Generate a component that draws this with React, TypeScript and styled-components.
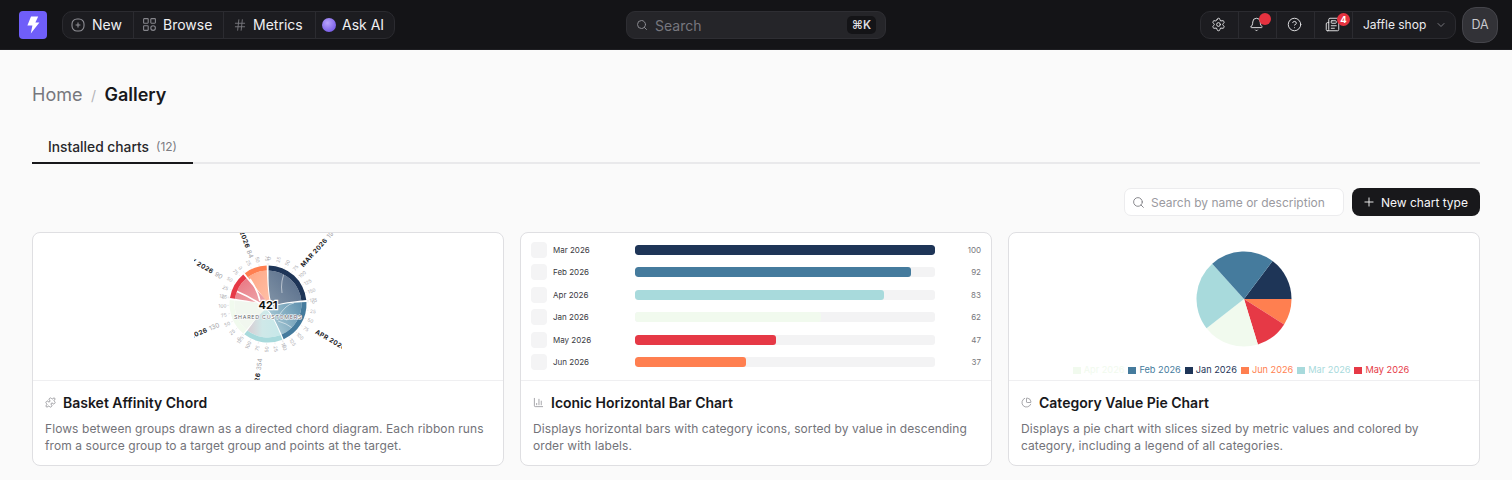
import React from 'react';
import styled, { createGlobalStyle } from 'styled-components';
import { Bell, ChartColumn, ChartPie, ChevronDown, CircleHelp, Hash, Newspaper, Plus, Puzzle, Search, Settings } from 'lucide-react';

const Global = createGlobalStyle`
  html, body { margin: 0; padding: 0; background: #fafafa; overflow: hidden; }
  body { font-family: Inter, "Noto Sans", sans-serif; -webkit-font-smoothing: antialiased; }
  * { box-sizing: border-box; }
`;

const Page = styled.div`width: 1512px; height: 480px; display: flex; flex-direction: column;`;
const TopBar = styled.header`
  height: 50px; flex: none; background: #141417; display: flex; align-items: center; justify-content: space-between;
  padding: 0 14px 0 19px; position: relative; border-bottom: 1px solid #1e1e22;
`;
const Side = styled.div`display: flex; align-items: center; gap: ${p => p.$gap}px;`;
const Logo = styled.div`width: 28px; height: 28px; border-radius: 4px; background: #6f5ef9; display: flex; align-items: center; justify-content: center;`;
const Group = styled.div`height: 28px; display: flex; border: 1px solid #2b2b30; border-radius: 10px; background: #1c1c20; overflow: visible;`;
const NavItem = styled.div`
  width: ${p => p.$w}px; height: 100%; display: flex; align-items: center; justify-content: ${p => p.$center ? 'center' : 'flex-start'};
  gap: ${p => p.$gap ?? 8}px; padding-left: ${p => p.$pl ?? 0}px; padding-right: ${p => p.$center ? 2 : 0}px;
  color: #f0f0f2; font-size: 14px; font-weight: 400; position: relative;
  & + & { border-left: 1px solid #2b2b30; }
  svg { flex: none; }
`;
const Orb = styled.span`width: 14px; height: 14px; border-radius: 50%; background: radial-gradient(circle at 40% 35%, #b9a4fb, #7a5ee8 75%); display: block;`;
const Dot = styled.span`position: absolute; left: 20px; top: 1px; width: 12px; height: 12px; border-radius: 50%; background: #e5323f;`;
const Count = styled.span`
  position: absolute; left: 22px; top: 1px; width: 13px; height: 13px; border-radius: 50%; background: #e5323f; color: #fff;
  font-size: 9.5px; font-weight: 700; display: flex; align-items: center; justify-content: center;
`;
const TopSearch = styled.div`
  position: absolute; left: 626px; top: 11px; width: 260px; height: 28px; background: #252529; border: 1px solid #2e2e33; border-radius: 9px;
  display: flex; align-items: center; padding: 0 9px 0 9px; gap: 7px; color: #77777e; font-size: 14px;
`;
const Grow = styled.span`flex: 1;`;
const Kbd = styled.span`height: 18px; width: 29px; background: #141417; border-radius: 5px; color: #dcdce0; font-size: 11.5px; font-weight: 600; display: flex; align-items: center; justify-content: center;`;
const Shop = styled.div`width: 103px; height: 100%; display: flex; align-items: center; gap: 9px; padding-left: 10px; color: #ececef; font-size: 12px; font-weight: 400; border-left: 1px solid #2b2b30;`;
const Avatar = styled.div`width: 36px; height: 36px; border-radius: 14px; background: #323237; border: 1px solid #45454b; color: #c9c9ce; font-size: 12.5px; font-weight: 400; display: flex; align-items: center; justify-content: center;`;

const Main = styled.main`flex: 1; padding: 0 32px; display: flex; flex-direction: column;`;
const Crumbs = styled.div`display: flex; align-items: baseline; height: 24px; margin-top: 33px; font-size: 18px; line-height: 24px; font-weight: 600; color: #18181b;`;
const CrumbHome = styled.span`color: #77777d; font-weight: 400;`;
const CrumbSep = styled.span`color: #b4b4b8; font-size: 14px; font-weight: 400; margin: 0 8.5px;`;
const Tabs = styled.div`margin-top: 25px; height: 32px; border-bottom: 2px solid #e9e9eb; display: flex;`;
const Tab = styled.div`
  width: 161px; height: 32px; border-bottom: 2px solid #18181b; display: flex; align-items: center; padding: 0 0 1px 16px; gap: 7px;
  color: #27272a; font-size: 13.8px; font-weight: 500;
`;
const TabCount = styled.span`color: #7c7c82; font-size: 12px; font-weight: 400;`;
const Toolbar = styled.div`margin-top: 24px; height: 28px; display: flex; justify-content: flex-end; gap: 8px;`;
const FilterBox = styled.div`
  width: 220px; height: 28px; background: #fff; border: 1px solid #ececee; border-radius: 7px; display: flex; align-items: center;
  gap: 6px; padding-left: 7px; color: #9a9aa0; font-size: 12px;
`;
const Primary = styled.button`
  width: 128px; height: 28px; background: #18181b; color: #f7f7f8; border: 0; border-radius: 8px; display: flex; align-items: center; gap: 5px;
  padding: 0 0 0 10px; font: 400 12px Inter, sans-serif;
`;
const Grid = styled.section`margin-top: 16px; display: grid; grid-template-columns: repeat(3, 472px); gap: 16px;`;
const Card = styled.article`height: 234px; background: #fff; border: 1px solid #dfdfe2; border-radius: 8px; overflow: hidden; display: flex; flex-direction: column;`;
const Preview = styled.div`height: 148px; flex: none; border-bottom: 1px solid #efeff1; display: flex; justify-content: center;`;
const Body = styled.div`padding: 12px 12px 0;`;
const TitleRow = styled.h3`margin: 0; display: flex; align-items: center; gap: ${p => p.$gap}px; height: 18px; font-size: 14px; font-weight: 600; color: #18181b; svg { flex: none; }`;
const Desc = styled.p`margin: 9px 0 0; font-size: 12px; line-height: 17px; color: #737379; letter-spacing: 0.08px;`;

const BarList = styled.div`width: 100%; padding: 9px 10px 0; display: flex; flex-direction: column; gap: 6.4px;`;
const BarRow = styled.div`display: grid; grid-template-columns: 16px 88px 300px 1fr; height: 16px; align-items: center;`;
const IconBox = styled.span`width: 16px; height: 16px; background: #f4f4f5; border-radius: 4px; display: block;`;
const BarLabel = styled.span`padding-left: 6px; font-size: 8px; color: #3a3a3f; font-weight: 400;`;
const Track = styled.span`height: 10px; background: #f3f3f4; border-radius: 3px; display: block; overflow: hidden;`;
const Fill = styled.span`height: 100%; display: block; border-radius: 3px; background: ${p => p.$c};`;
const BarVal = styled.span`text-align: right; font-size: 8px; color: #77777c;`;

const PieWrap = styled.div`width: 100%; display: flex; flex-direction: column; align-items: center; padding-top: 18px;`;
const Legend = styled.div`display: flex; gap: 4px; margin-top: 17px; height: 12px; align-items: center; margin-left: -6px;`;
const LegendItem = styled.span`display: flex; align-items: center; gap: 3px; font-size: 9.2px; line-height: 12px; color: ${p => p.$c};`;
const Swatch = styled.i`width: 8px; height: 7px; display: block; background: ${p => p.$c};`;

const C = { navy: '#1e3557', blue: '#457b9d', teal: '#a8dadc', pale: '#f1faee', red: '#e63946', orange: '#ff7f50' };

const pt = (cx: number, cy: number, r: number, deg: number) => {
  const a = (deg - 90) * Math.PI / 180;
  return [+(cx + r * Math.cos(a)).toFixed(2), +(cy + r * Math.sin(a)).toFixed(2)];
};
const ring = (r0: number, r1: number, a: number, b: number) => {
  const [x1, y1] = pt(74, 71, r1, a), [x2, y2] = pt(74, 71, r1, b), [x3, y3] = pt(74, 71, r0, b), [x4, y4] = pt(74, 71, r0, a);
  return `M${x1} ${y1}A${r1} ${r1} 0 0 1 ${x2} ${y2}L${x3} ${y3}A${r0} ${r0} 0 0 0 ${x4} ${y4}Z`;
};
const ribbon = (a: number, b: number, r: number, tip: number, tipA: number) => {
  const [x1, y1] = pt(74, 71, r, a), [x2, y2] = pt(74, 71, r, b), [tx, ty] = pt(74, 71, tip, tipA);
  return `M${x1} ${y1}A${r} ${r} 0 0 1 ${x2} ${y2}Q${74} ${71} ${tx} ${ty}Q${74} ${71} ${x1} ${y1}Z`;
};

const groups = [
  { c: C.navy, a: 1, b: 84, ticks: [0, 25, 50, 75, 100, 125, 150, 175] },
  { c: C.blue, a: 87, b: 156, ticks: [0, 25, 50, 75, 100, 125, 150] },
  { c: C.teal, a: 158, b: 218, ticks: [0, 25, 50, 75, 100, 125] },
  { c: C.pale, a: 220, b: 276, ticks: [0, 25, 50, 75, 100, 125] },
  { c: C.red, a: 279, b: 320, ticks: [0, 25, 50, 75] },
  { c: C.orange, a: 323, b: 358, ticks: [0, 25, 50, 75] },
];
const labels = [
  { t: 'MAR 2026', n: '198', deg: 42, r: 51, end: false },
  { t: 'APR 2026', n: '', deg: 120, r: 55, end: false },
  { t: 'FEB 2026', n: '354', deg: 188, r: 55, end: true },
  { t: 'JAN 2026', n: '130', deg: 247, r: 53, end: true },
  { t: 'MAY 2026', n: '90', deg: 300, r: 53, end: true },
  { t: 'JUN 2026', n: '84', deg: 340, r: 49, end: true },
];

const ChordSvg = styled.svg`width: 148px; height: 147px; display: block; text { font-family: Inter, sans-serif; }`;

function Chord() {
  return (
    <ChordSvg viewBox="0 0 148 147">
      <defs>
        <linearGradient id="gn" x1="1" y1="0" x2="0" y2="1"><stop offset="0" stopColor="#526887" /><stop offset="1" stopColor="#8496a8" /></linearGradient>
        <linearGradient id="gb" x1="1" y1="0" x2="0" y2="0.5"><stop offset="0" stopColor="#5f90ae" /><stop offset="1" stopColor="#aacbd6" /></linearGradient>
        <linearGradient id="gt" x1="1" y1="0" x2="0" y2="0"><stop offset="0" stopColor="#c6e8e9" /><stop offset=".55" stopColor="#cfe8e8" /><stop offset="1" stopColor="#d8ccd2" /></linearGradient>
        <linearGradient id="gr" x1="0" y1="0" x2="1" y2="1"><stop offset="0" stopColor="#e9727d" /><stop offset="1" stopColor="#eeb3b8" /></linearGradient>
        <linearGradient id="go" x1="0" y1="0" x2="1" y2="1"><stop offset="0" stopColor="#ffa582" /><stop offset="1" stopColor="#ffc4ad" /></linearGradient>
      </defs>
      <path d={ribbon(1, 84, 33.5, 8, 120)} fill="url(#gn)" />
      <path d={ribbon(87, 156, 33.5, 8, 190)} fill="url(#gb)" />
      <path d={ribbon(158, 218, 33.5, 9, 250)} fill="url(#gt)" />
      <path d={ribbon(220, 276, 33.5, 8, 80)} fill="#f1f7ef" />
      <path d={ribbon(279, 320, 33.5, 7, 100)} fill="url(#gr)" />
      <path d={ribbon(323, 358, 33.5, 6, 130)} fill="url(#go)" />
      <path d="M42 58 Q56 64 68 72M56 46 Q64 58 66 68" stroke="#fff" strokeWidth="1.6" fill="none" />
      <path d="M100 70 Q92 71 84 84M92 36 Q86 48 88 60M100 96 Q92 90 84 88" stroke="#fff" strokeWidth=".7" fill="none" opacity=".75" />
      {groups.map((g, i) => <path key={i} d={ring(33.5, 38.5, g.a, g.b)} fill={g.c} />)}
      {groups.map((g, i) => g.ticks.map((v, k) => {
        const deg = g.a + k * 12;
        const [x1, y1] = pt(74, 71, 39, deg), [x2, y2] = pt(74, 71, 41, deg), [x, y] = pt(74, 71, 45.5, deg);
        const rot = deg < 180 ? deg - 90 : deg + 90;
        return (
          <g key={`${i}-${k}`}>
            <line x1={x1} y1={y1} x2={x2} y2={y2} stroke="#dedee1" strokeWidth=".5" />
            <text x={x} y={y} fontSize="4.8" fill="#ababb0" textAnchor="middle" dominantBaseline="central" transform={`rotate(${rot} ${x} ${y})`}>{v}</text>
          </g>
        );
      }))}
      {labels.map(l => {
        const [x, y] = pt(74, 71, l.r, l.deg);
        const rot = l.end ? l.deg + 90 : l.deg - 90;
        return (
          <text key={l.t} x={x} y={y} fontSize="6.4" fontWeight="700" letterSpacing=".4" fill="#222226" textAnchor={l.end ? 'end' : 'start'} dominantBaseline="central" transform={`rotate(${rot} ${x} ${y})`}>
            {l.t}<tspan dx="2.5" fontWeight="400" fill="#a1a1a6" letterSpacing="0">{l.n}</tspan>
          </text>
        );
      })}
      <text x="74" y="72" fontSize="11" fontWeight="700" fill="#111" stroke="#fff" strokeWidth="2.4" paintOrder="stroke" textAnchor="middle" dominantBaseline="central">421</text>
      <text x="74" y="84" fontSize="5.3" fontWeight="400" letterSpacing=".75" fill="#66666c" stroke="#fff" strokeWidth="1.2" paintOrder="stroke" textAnchor="middle" dominantBaseline="central">SHARED CUSTOMERS</text>
    </ChordSvg>
  );
}

const bars = [
  ['Mar 2026', 100, C.navy], ['Feb 2026', 92, C.blue], ['Apr 2026', 83, C.teal],
  ['Jan 2026', 62, C.pale], ['May 2026', 47, C.red], ['Jun 2026', 37, C.orange],
] as const;

const pie = [
  { c: C.navy, a: 37, b: 90 }, { c: C.orange, a: 90, b: 122.4 }, { c: C.red, a: 122.4, b: 163 },
  { c: C.pale, a: 163, b: 232 }, { c: C.teal, a: 232, b: 318 }, { c: C.blue, a: 318, b: 397 },
];
const legend = [
  ['Apr 2026', C.pale], ['Feb 2026', C.blue], ['Jan 2026', C.navy], ['Jun 2026', C.orange], ['Mar 2026', C.teal], ['May 2026', C.red],
] as const;

const wedge = (a: number, b: number) => {
  const p = (d: number) => { const r = (d - 90) * Math.PI / 180; return `${(48 + 47.5 * Math.cos(r)).toFixed(2)} ${(48 + 47.5 * Math.sin(r)).toFixed(2)}`; };
  return `M48 48L${p(a)}A47.5 47.5 0 0 1 ${p(b)}Z`;
};

const NewIcon = () => (
  <svg width="14" height="14" viewBox="0 0 14 14" fill="none" stroke="#8f8f95" strokeWidth="1.1">
    <rect x="1" y="1" width="12" height="12" rx="5" /><path d="M7 4.6v4.8M4.6 7h4.8" />
  </svg>
);
const BrowseIcon = () => (
  <svg width="13" height="13" viewBox="0 0 13 13" fill="none" stroke="#85858b" strokeWidth="1.1">
    <rect x=".6" y=".6" width="4.6" height="4.6" rx=".6" /><rect x="7.8" y=".6" width="4.6" height="4.6" rx=".6" />
    <rect x=".6" y="7.8" width="4.6" height="4.6" rx=".6" /><circle cx="10.1" cy="10.1" r="2.3" />
  </svg>
);
const Bolt = () => (
  <svg width="14" height="18" viewBox="0 0 14 18"><path d="M5 0.6h7.2L9.4 6.6h4L4.8 17.6l1.6-8H1.4z" fill="#fff" /></svg>
);

export default function App() {
  return (
    <Page>
      <Global />
      <TopBar>
        <Side $gap={15}>
          <Logo><Bolt /></Logo>
          <Group>
            <NavItem $w={70} $pl={8} $gap={7}><NewIcon />New</NavItem>
            <NavItem $w={90} $pl={9} $gap={7}><BrowseIcon />Browse</NavItem>
            <NavItem $w={92} $pl={9} $gap={6}><Hash size={14} color="#77777d" strokeWidth={1.6} />Metrics</NavItem>
            <NavItem $w={79} $pl={6} $gap={6}><Orb />Ask AI</NavItem>
          </Group>
        </Side>
        <TopSearch>
          <Search size={12} color="#8a8a90" strokeWidth={2} />
          <Grow>Search</Grow>
          <Kbd>⌘K</Kbd>
        </TopSearch>
        <Side $gap={6}>
          <Group>
            <NavItem $w={37} $center><Settings size={15} color="#e6e6e9" strokeWidth={1.5} /></NavItem>
            <NavItem $w={38} $center><Bell size={15} color="#e6e6e9" strokeWidth={1.5} /><Dot /></NavItem>
            <NavItem $w={38} $center><CircleHelp size={15} color="#e6e6e9" strokeWidth={1.5} /></NavItem>
            <NavItem $w={38} $center><Newspaper size={15} color="#e6e6e9" strokeWidth={1.5} /><Count>4</Count></NavItem>
            <Shop>Jaffle shop<ChevronDown size={12} color="#77777d" /></Shop>
          </Group>
          <Avatar>DA</Avatar>
        </Side>
      </TopBar>
      <Main>
        <Crumbs><CrumbHome>Home</CrumbHome><CrumbSep>/</CrumbSep>Gallery</Crumbs>
        <Tabs><Tab>Installed charts<TabCount>(12)</TabCount></Tab></Tabs>
        <Toolbar>
          <FilterBox><Search size={13} color="#77777d" strokeWidth={1.6} />Search by name or description</FilterBox>
          <Primary><Plus size={14} strokeWidth={1.6} />New chart type</Primary>
        </Toolbar>
        <Grid>
          <Card>
            <Preview><Chord /></Preview>
            <Body>
              <TitleRow $gap={7}><Puzzle size={11} color="#77777d" strokeWidth={1.4} />Basket Affinity Chord</TitleRow>
              <Desc>Flows between groups drawn as a directed chord diagram. Each ribbon runs from a source group to a target group and points at the target.</Desc>
            </Body>
          </Card>
          <Card>
            <Preview>
              <BarList>
                {bars.map(([n, v, c]) => (
                  <BarRow key={n}>
                    <IconBox /><BarLabel>{n}</BarLabel>
                    <Track><Fill $c={c} style={{ width: `${v}%` }} /></Track>
                    <BarVal>{v}</BarVal>
                  </BarRow>
                ))}
              </BarList>
            </Preview>
            <Body>
              <TitleRow $gap={7}><ChartColumn size={11} color="#77777d" strokeWidth={1.4} />Iconic Horizontal Bar Chart</TitleRow>
              <Desc>Displays horizontal bars with category icons, sorted by value in descending order with labels.</Desc>
            </Body>
          </Card>
          <Card>
            <Preview>
              <PieWrap>
                <svg width="96" height="96" viewBox="0 0 96 96">
                  {pie.map(s => <path key={s.c} d={wedge(s.a, s.b)} fill={s.c} />)}
                </svg>
                <Legend>
                  {legend.map(([n, c]) => <LegendItem key={n} $c={c}><Swatch $c={c} />{n}</LegendItem>)}
                </Legend>
              </PieWrap>
            </Preview>
            <Body>
              <TitleRow $gap={7}><ChartPie size={11} color="#77777d" strokeWidth={1.4} />Category Value Pie Chart</TitleRow>
              <Desc>Displays a pie chart with slices sized by metric values and colored by category, including a legend of all categories.</Desc>
            </Body>
          </Card>
        </Grid>
      </Main>
    </Page>
  );
}
